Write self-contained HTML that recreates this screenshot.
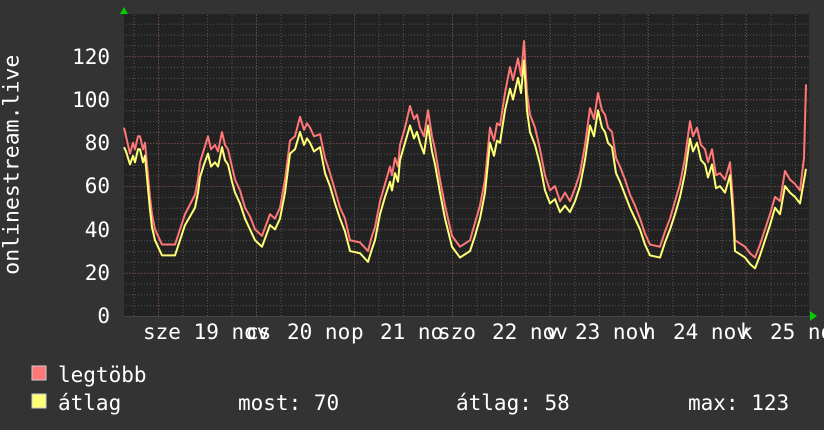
<!DOCTYPE html>
<html><head><meta charset="utf-8"><style>
body{margin:0;width:824px;height:430px;background:#333;overflow:hidden;font-family:"DejaVu Sans Mono","Liberation Mono",monospace;color:#fff;position:relative}
.t{position:absolute;font-size:21px;line-height:1;white-space:pre}
</style></head><body>
<svg width="824" height="430" style="position:absolute;left:0;top:0">
<defs>
<pattern id="mh" x="0" y="316" width="824" height="10.825" patternUnits="userSpaceOnUse"><line x1="0" y1="0.5" x2="824" y2="0.5" stroke="#555" stroke-dasharray="1,2"/></pattern>
<pattern id="mv" x="133.5" y="0" width="24.5" height="430" patternUnits="userSpaceOnUse"><line x1="0.5" y1="0" x2="0.5" y2="430" stroke="#555" stroke-dasharray="1,2"/></pattern>
</defs>
<rect x="124" y="14" width="685" height="302" fill="#222"/>
<rect x="124" y="14" width="685" height="302" fill="url(#mh)"/>
<rect x="124" y="14" width="685" height="302" fill="url(#mv)"/>
<g stroke="#6a3030" stroke-dasharray="1,2">
<line x1="124" y1="56.5" x2="809" y2="56.5"/><line x1="124" y1="99.5" x2="809" y2="99.5"/><line x1="124" y1="143.5" x2="809" y2="143.5"/><line x1="124" y1="186.5" x2="809" y2="186.5"/><line x1="124" y1="229.5" x2="809" y2="229.5"/><line x1="124" y1="273.5" x2="809" y2="273.5"/>
<line x1="158.5" y1="14" x2="158.5" y2="320"/><line x1="256.5" y1="14" x2="256.5" y2="320"/><line x1="354.5" y1="14" x2="354.5" y2="320"/><line x1="452.5" y1="14" x2="452.5" y2="320"/><line x1="549.5" y1="14" x2="549.5" y2="320"/><line x1="647.5" y1="14" x2="647.5" y2="320"/><line x1="745.5" y1="14" x2="745.5" y2="320"/>
</g>
<line x1="124" y1="316.5" x2="812" y2="316.5" stroke="#444"/>
<polygon points="120,14 128,14 124,7" fill="#0c0"/>
<polygon points="810,311 810,321 817,316" fill="#0c0"/>
<g transform="translate(0,316) scale(1,-2.165)" fill="none" stroke-width="2" stroke-linejoin="round">
<polyline vector-effect="non-scaling-stroke" stroke="#f77" transform="translate(0,3)" points="124,84 126,80 130,72 133,77 135,74 138,80 140,80 143,74 145,77 150,52 152,44 155,37 162,30 175,30 185,44 195,53 198,60 200,68 204,74 208,80 211,74 215,76 218,73 222,82 225,76 228,74 232,66 235,60 240,55 245,47 250,43 255,37 262,34 270,44 275,42 280,47 285,60 290,78 295,80 300,89 304,83 307,86 310,84 314,80 320,81 325,70 330,63 335,55 340,47 345,42 350,32 360,31 368,27 372,34 375,38 380,50 385,58 390,66 392,62 395,70 398,66 400,76 405,84 410,94 414,88 417,90 420,84 424,80 428,92 432,80 435,74 440,60 445,48 452,34 460,29 470,32 475,40 480,48 485,60 490,84 494,78 497,86 500,85 505,100 510,112 513,106 518,116 521,108 524,124 527,100 530,90 535,84 540,74 545,62 550,55 555,57 560,50 565,54 570,50 575,56 580,63 585,76 590,93 594,88 598,100 602,92 605,90 608,84 612,82 616,70 620,66 625,60 630,53 635,48 640,42 645,35 650,30 660,29 665,36 670,42 675,50 680,58 685,70 690,87 693,80 697,84 701,76 705,74 708,68 712,74 716,62 720,63 725,60 730,68 733,50 735,32 745,29 750,26 755,24 760,30 765,37 770,44 775,52 780,50 785,64 790,60 795,58 800,55 804,70 806,104"/>
<polyline vector-effect="non-scaling-stroke" stroke="#ff7" points="124,78 126,76 130,70 133,74 135,71 138,77 140,77 143,71 145,74 150,49 152,41 155,35 162,28 175,28 185,42 195,50 198,57 200,64 204,70 208,75 211,69 215,71 218,69 222,78 225,72 228,70 232,62 235,57 240,52 245,45 250,40 255,35 262,32 270,42 275,40 280,45 285,57 290,75 295,77 300,85 304,79 307,82 310,80 314,76 320,78 325,66 330,60 335,52 340,45 345,39 350,30 360,29 368,25 372,31 375,35 380,47 385,55 390,62 392,58 395,66 398,62 400,72 405,80 410,88 414,82 417,85 420,80 424,75 428,88 432,76 435,70 440,57 445,45 452,32 460,27 470,30 475,37 480,45 485,57 490,80 494,74 497,81 500,80 505,95 510,105 513,100 518,110 521,103 524,118 527,95 530,85 535,79 540,70 545,58 550,52 555,54 560,48 565,51 570,48 575,53 580,60 585,72 590,88 594,83 598,95 602,87 605,85 608,80 612,78 616,66 620,62 625,56 630,50 635,45 640,40 645,33 650,28 660,27 665,34 670,40 675,47 680,55 685,66 690,82 693,76 697,80 701,72 705,70 708,64 712,70 716,59 720,60 725,57 730,65 733,47 735,30 745,27 750,24 755,22 760,28 765,35 770,42 775,50 780,47 785,60 790,57 795,55 800,52 806,68"/>
</g>
<rect x="32" y="366" width="14" height="14" fill="#f77" stroke="#ccc"/>
<rect x="32" y="394" width="14" height="14" fill="#ff7" stroke="#ccc"/>
</svg>
<div class="t" style="left:-78px;top:174px;transform:rotate(-90deg);transform-origin:center;width:180px;text-align:center;font-size:21.5px">onlinestream.live</div>
<div class="t" style="right:714px;top:47px">120</div>
<div class="t" style="right:714px;top:90px">100</div>
<div class="t" style="right:714px;top:133px">80</div>
<div class="t" style="right:714px;top:176px">60</div>
<div class="t" style="right:714px;top:220px">40</div>
<div class="t" style="right:714px;top:263px">20</div>
<div class="t" style="right:714px;top:306px">0</div>
<div class="t" style="left:143px;top:322px">sze 19 nov</div>
<div class="t" style="left:246px;top:322px">cs</div>
<div class="t" style="left:287px;top:322px">20 no</div>
<div class="t" style="left:351px;top:322px">p</div>
<div class="t" style="left:380px;top:322px">21 no</div>
<div class="t" style="left:438px;top:322px">szo</div>
<div class="t" style="left:492px;top:322px">22 nov</div>
<div class="t" style="left:546px;top:322px">v</div>
<div class="t" style="left:575px;top:322px">23 nov</div>
<div class="t" style="left:643px;top:322px">h</div>
<div class="t" style="left:673px;top:322px">24 nov</div>
<div class="t" style="left:740px;top:322px">k</div>
<div class="t" style="left:770px;top:322px">25 no</div>
<div class="t" style="left:58px;top:365px">legtöbb</div>
<div class="t" style="left:58px;top:393px">átlag</div>
<div class="t" style="left:238px;top:393px">most: 70</div>
<div class="t" style="left:456px;top:393px">átlag: 58</div>
<div class="t" style="left:688px;top:393px">max: 123</div>
</body></html>
